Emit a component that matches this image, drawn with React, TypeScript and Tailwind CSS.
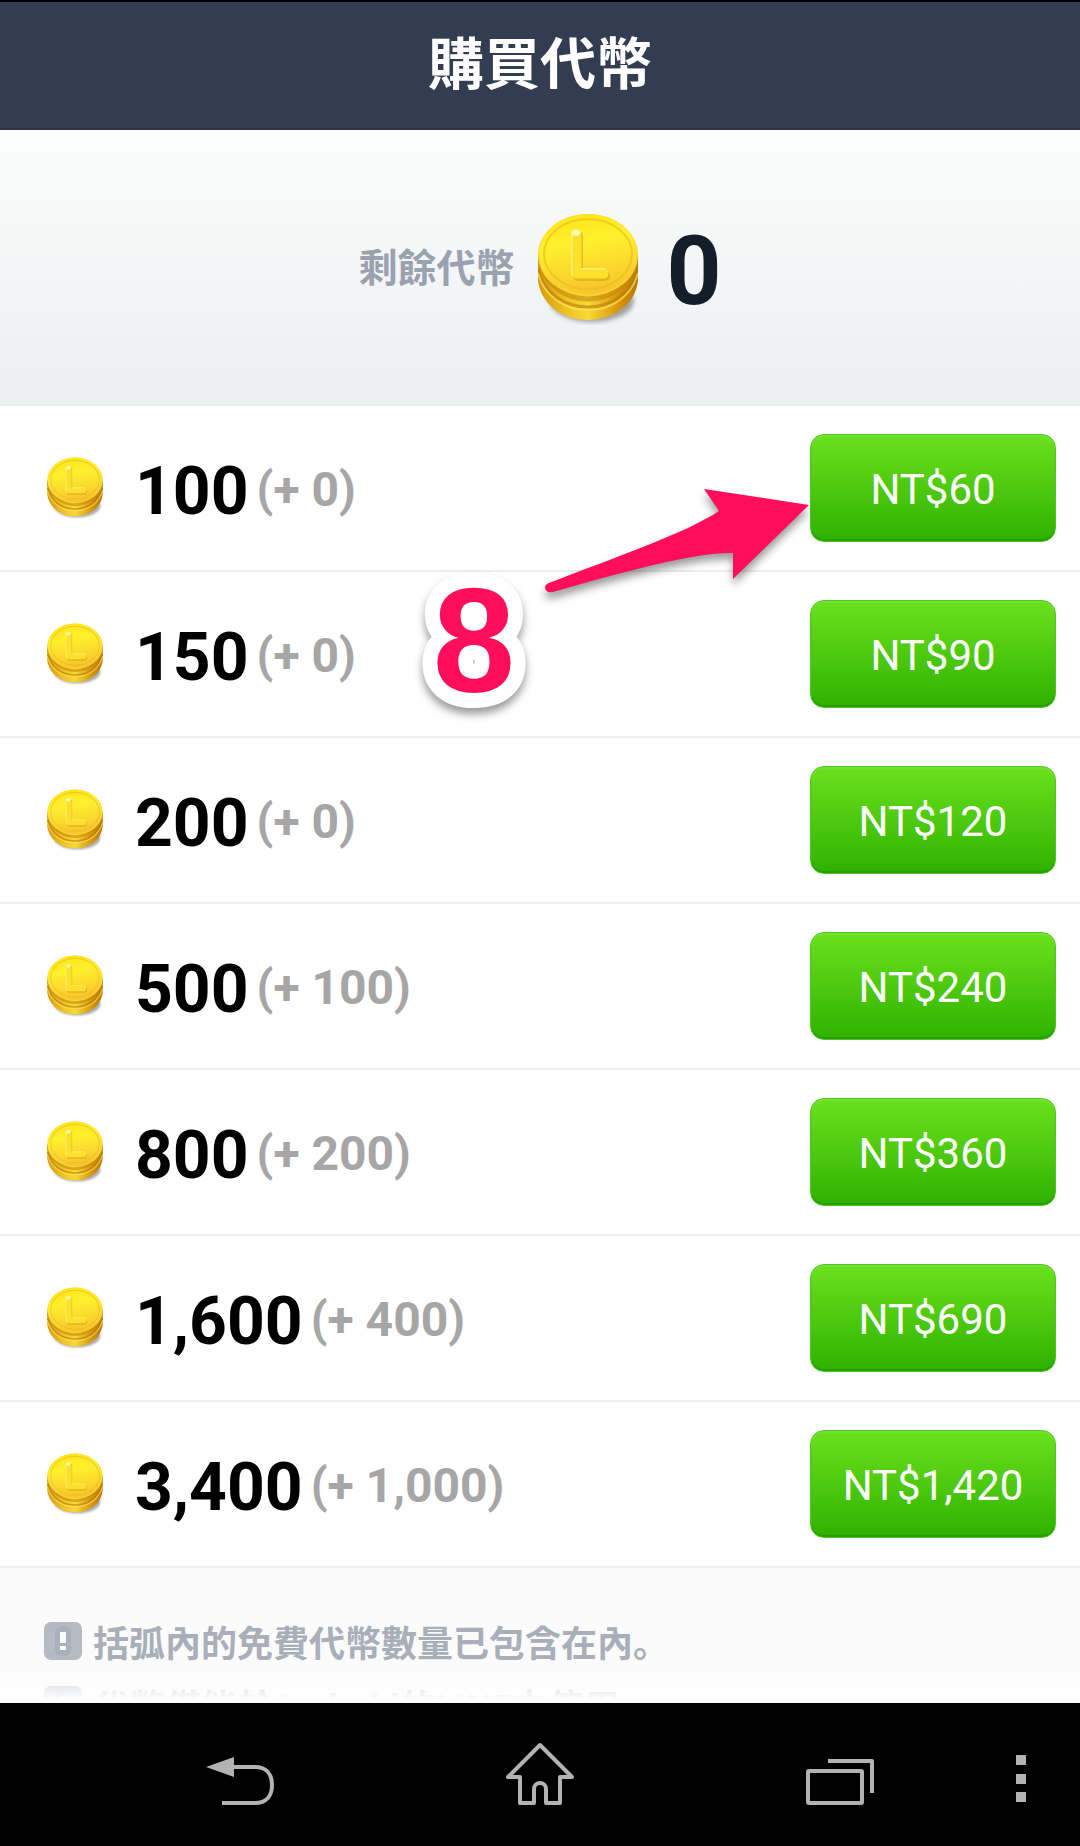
import React from "react";

interface CoinPackage {
  amount: string;
  bonus: string;
  price: string;
}

const packages: CoinPackage[] = [
  { amount: "100", bonus: "0", price: "NT$60" },
  { amount: "150", bonus: "0", price: "NT$90" },
  { amount: "200", bonus: "0", price: "NT$120" },
  { amount: "500", bonus: "100", price: "NT$240" },
  { amount: "800", bonus: "200", price: "NT$360" },
  { amount: "1,600", bonus: "400", price: "NT$690" },
  { amount: "3,400", bonus: "1,000", price: "NT$1,420" },
];

const notes = [
  "括弧內的免費代幣數量已包含在內。",
  "代幣僅能於Android的LINE方使用",
];

interface CoinProps {
  id: string;
  className: string;
}

const Coin: React.FC<CoinProps> = ({ id, className }) => (
  <svg viewBox="0 0 100 112" className={className} aria-hidden="true">
    <defs>
      <linearGradient id={`${id}-face`} x1="0.4" y1="0" x2="0.6" y2="1">
        <stop offset="0" stopColor="#ffe61a" />
        <stop offset="0.35" stopColor="#fff02e" />
        <stop offset="1" stopColor="#f7c22c" />
      </linearGradient>
      <linearGradient id={`${id}-side`} x1="0" y1="0" x2="1" y2="0">
        <stop offset="0" stopColor="#d49a10" />
        <stop offset="0.3" stopColor="#f0c424" />
        <stop offset="0.5" stopColor="#f8d838" />
        <stop offset="0.8" stopColor="#d8960c" />
        <stop offset="1" stopColor="#b87606" />
      </linearGradient>
      <filter id={`${id}-blur`} x="-20%" y="-50%" width="140%" height="200%">
        <feGaussianBlur stdDeviation="2" />
      </filter>
    </defs>
    <ellipse cx="54" cy="88" rx="42" ry="21" fill="#00000055" filter={`url(#${id}-blur)`} />
    <path d="M0 42V68C3 91 24 107 50 107S97 91 100 68V42Z" fill={`url(#${id}-side)`} />
    <path d="M0 56C6 80 26 94 50 94S94 80 100 56" fill="none" stroke="#b87a0899" strokeWidth="3" />
    <path d="M0 60C6 83 26 97 50 97S94 83 100 60" fill="none" stroke="#ffe658aa" strokeWidth="2" />
    <path d="M1 46C6 70 26 86 50 86S94 70 99 46" fill="none" stroke="#c4880a99" strokeWidth="5" />
    <ellipse cx="50" cy="42" rx="50" ry="41" fill="#f9d234" />
    <ellipse cx="50" cy="41" rx="49" ry="40" fill={`url(#${id}-face)`} />
    <ellipse cx="50" cy="41" rx="44" ry="35" fill="none" stroke="#e9b91c99" strokeWidth="2" />
    <path d="M40 23V63H67" fill="none" stroke="#cf9c1288" strokeWidth="10" strokeLinecap="round" strokeLinejoin="round" />
    <path d="M38 21V60H65" fill="none" stroke="#fff27a" strokeWidth="10" strokeLinecap="round" strokeLinejoin="round" />
    <path d="M39 23V61H66" fill="none" stroke="#fde02a" strokeWidth="9" strokeLinecap="round" strokeLinejoin="round" />
    <ellipse cx="38" cy="20" rx="4" ry="3" fill="#fff9b8" />
  </svg>
);

const NoticeIcon = () => (
  <svg viewBox="0 0 38 38" className="size-[38px] shrink-0" aria-hidden="true">
    <rect width="38" height="38" rx="7" fill="#b5bac3" />
    <rect x="11" y="4" width="16" height="30" rx="6" fill="#abb1bb" />
    <rect x="16" y="10" width="6" height="11" fill="#fbfbfb" />
    <rect x="16" y="24" width="6" height="4" fill="#fbfbfb" />
  </svg>
);

// callout pointing at the first price button
const Callout = () => (
  <svg
    viewBox="0 0 400 230"
    className="pointer-events-none absolute top-[74px] right-[264px] h-[230px] w-[400px] overflow-visible drop-shadow-[0_6px_4px_rgba(0,0,0,0.4)]"
    aria-hidden="true"
  >
    <path
      d="M288 9L393 25L317 99V73C280 72 210 91 137 112C129 114 126 105 133 103C200 77 270 53 303 31Z"
      fill="#ff0f5b"
    />
    <text
      x="58"
      y="212"
      textAnchor="middle"
      className="font-['Liberation_Sans',sans-serif] text-[148px] font-bold"
      fill="#ff0f5b"
      stroke="#ffffff"
      strokeWidth="30"
      strokeLinejoin="round"
      paintOrder="stroke"
    >
      8
    </text>
  </svg>
);

const App: React.FC = () => {
  return (
    <div className="flex min-h-screen flex-col bg-white font-[Roboto,'Noto_Sans_CJK_TC',sans-serif]">
      <header className="flex h-[130px] items-center justify-center border-t-2 border-b-2 border-t-black border-b-[#2b3448] bg-[#333d52]">
        <h1 className="text-[56px] leading-none font-bold text-white">購買代幣</h1>
      </header>

      <section className="flex h-[276px] items-center justify-center border-b-2 border-[#e9ebec] bg-linear-to-b from-[#fcfdfd] to-[#ebeff0] pt-1">
        <span className="text-[39px] font-bold text-[#9aa1af]">剩餘代幣</span>
        <Coin id="balance" className="ml-6 h-[112px] w-[100px]" />
        <span className="ml-7 pt-1 text-[96px] leading-none font-bold text-[#161d2a]">0</span>
      </section>

      <main className="relative">
        <ul>
          {packages.map((item, index) => (
            <li
              key={item.amount}
              className="flex h-[166px] items-center border-b-2 border-[#ededed] pr-6 pl-[47px]"
            >
              <Coin id={`coin-${index}`} className="h-[62px] w-[56px]" />
              <div className="flex items-center gap-2 pl-8 leading-none font-bold">
                <span className="pt-2 text-[66px] text-black">{item.amount}</span>
                <span className="pt-1 text-[48px] text-[#a6a6a6]">(+ {item.bonus})</span>
              </div>
              <button
                type="button"
                className="ml-auto h-[108px] w-[246px] rounded-[14px] border border-[#4fc71c] bg-linear-to-b from-[#69e11c] to-[#2db200] pt-0.5 text-[42px] text-white shadow-[inset_0_2px_1px_#76e236,inset_0_-2px_1px_#279c04]"
              >
                {item.price}
              </button>
            </li>
          ))}
        </ul>
        <Callout />
      </main>

      <footer className="relative h-[135px] overflow-hidden bg-[#fbfbfb] px-11 pt-[54px]">
        <ul className="flex flex-col gap-[26px] font-[Roboto,'Noto_Sans_CJK_JP',sans-serif]">
          {notes.map((note) => (
            <li key={note} className="flex h-[38px] items-center gap-[11px]">
              <NoticeIcon />
              <span className="pt-2 text-[36px] leading-none font-bold text-[#a9afb9]">{note}</span>
            </li>
          ))}
        </ul>
        <div className="absolute inset-x-0 bottom-0 h-9 bg-linear-to-b from-white/20 to-white to-90%" />
      </footer>

      <nav className="grid flex-1 grid-cols-[90fr_300fr_300fr_300fr_90fr] items-center bg-black pb-1 text-[#b3b3b3]">
        <button type="button" aria-label="Back" className="col-start-2 justify-self-center">
          <svg viewBox="0 0 68 66" className="h-[66px] w-[68px]" fill="none" stroke="currentColor" strokeWidth="4">
            <path d="M27 27H49C60 27 66 34 66 45S60 63 49 63H16" />
            <path d="M0 27L28 17V37Z" fill="currentColor" stroke="none" />
          </svg>
        </button>
        <button type="button" aria-label="Home" className="justify-self-center">
          <svg viewBox="0 0 68 66" className="h-[66px] w-[68px]" fill="none" stroke="currentColor" strokeWidth="4" strokeLinejoin="round">
            <path d="M34 5L2 37H14V63H28V49A6 6 0 0 1 40 49V63H54V37H66Z" />
          </svg>
        </button>
        <button type="button" aria-label="Recent apps" className="justify-self-center">
          <svg viewBox="0 0 68 66" className="h-[66px] w-[68px]" fill="none" stroke="currentColor" strokeWidth="4">
            <rect x="2" y="31" width="54" height="32" rx="1" />
            <path d="M22 21H66V53" strokeLinejoin="round" />
          </svg>
        </button>
        <button type="button" aria-label="Menu" className="justify-self-center pr-7">
          <svg viewBox="0 0 10 66" className="h-[66px] w-[10px]" fill="currentColor">
            <rect y="15" width="10" height="10" />
            <rect y="34" width="10" height="10" />
            <rect y="52" width="10" height="10" />
          </svg>
        </button>
      </nav>
    </div>
  );
};

export default App;
